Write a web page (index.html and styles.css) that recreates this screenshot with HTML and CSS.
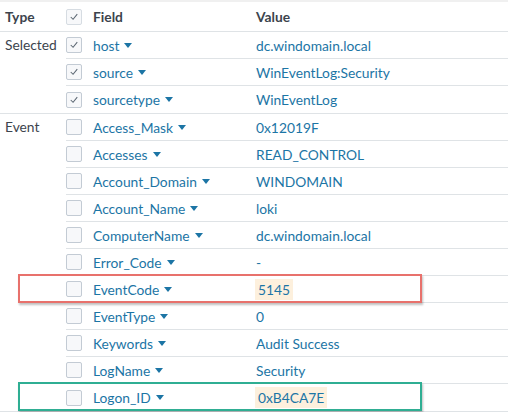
FILE: index.html
```html
<!DOCTYPE html>
<html>
<head>
<meta charset="utf-8">
<link rel="stylesheet" href="styles.css">
</head>
<body>
<div class="table">
  <div class="head">
    <div class="h-type">Type</div>
    <div class="cbcell"><span class="cb cb-head"><svg viewBox="0 0 15 15"><polyline points="4,7.5 6.5,10 11,4.5"/></svg></span></div>
    <div class="h-field">Field</div>
    <div class="h-value">Value</div>
  </div>

  <div class="group">
    <div class="type">Selected</div>
    <div class="rows">
      <div class="row"><div class="cbcell"><span class="cb"><svg viewBox="0 0 15 15"><polyline points="4,7.5 6.5,10 11,4.5"/></svg></span></div><div class="field">host<span class="caret"></span></div><div class="value">dc.windomain.local</div></div>
      <div class="row"><div class="cbcell"><span class="cb"><svg viewBox="0 0 15 15"><polyline points="4,7.5 6.5,10 11,4.5"/></svg></span></div><div class="field">source<span class="caret"></span></div><div class="value">WinEventLog:Security</div></div>
      <div class="row"><div class="cbcell"><span class="cb"><svg viewBox="0 0 15 15"><polyline points="4,7.5 6.5,10 11,4.5"/></svg></span></div><div class="field">sourcetype<span class="caret"></span></div><div class="value">WinEventLog</div></div>
    </div>
  </div>

  <div class="group">
    <div class="type">Event</div>
    <div class="rows">
      <div class="row"><div class="cbcell"><span class="cb"></span></div><div class="field">Access_Mask<span class="caret"></span></div><div class="value">0x12019F</div></div>
      <div class="row"><div class="cbcell"><span class="cb"></span></div><div class="field">Accesses<span class="caret"></span></div><div class="value">READ_CONTROL</div></div>
      <div class="row"><div class="cbcell"><span class="cb"></span></div><div class="field">Account_Domain<span class="caret"></span></div><div class="value">WINDOMAIN</div></div>
      <div class="row"><div class="cbcell"><span class="cb"></span></div><div class="field">Account_Name<span class="caret"></span></div><div class="value">loki</div></div>
      <div class="row"><div class="cbcell"><span class="cb"></span></div><div class="field">ComputerName<span class="caret"></span></div><div class="value">dc.windomain.local</div></div>
      <div class="row"><div class="cbcell"><span class="cb"></span></div><div class="field">Error_Code<span class="caret"></span></div><div class="value">-</div></div>
      <div class="row mark mark-red"><div class="cbcell"><span class="cb"></span></div><div class="field">EventCode<span class="caret"></span></div><div class="value"><span class="hl">5145</span></div></div>
      <div class="row"><div class="cbcell"><span class="cb"></span></div><div class="field">EventType<span class="caret"></span></div><div class="value">0</div></div>
      <div class="row"><div class="cbcell"><span class="cb"></span></div><div class="field">Keywords<span class="caret"></span></div><div class="value">Audit Success</div></div>
      <div class="row"><div class="cbcell"><span class="cb"></span></div><div class="field">LogName<span class="caret"></span></div><div class="value">Security</div></div>
      <div class="row mark mark-green"><div class="cbcell"><span class="cb"></span></div><div class="field">Logon_ID<span class="caret"></span></div><div class="value"><span class="hl">0xB4CA7E</span></div></div>
    </div>
  </div>
</div>
</body>
</html>
```
FILE: styles.css
```css
html, body {
  margin: 0;
  padding: 0;
  background: #ffffff;
}
body {
  font-family: "Lato", "Open Sans", sans-serif;
  font-size: 13.8px;
  color: #3c444d;
  overflow: hidden;
}
.table {
  border-top: 2px solid #f0f0f0;
}
.head {
  display: grid;
  grid-template-columns: 66px 27px 163px 1fr;
  height: 29px;
  align-items: center;
  border-bottom: 1px solid #dfe3e6;
  font-weight: 700;
  color: #3c444d;
}
.h-type {
  padding-left: 5px;
}
.group {
  display: grid;
  grid-template-columns: 66px 1fr;
  border-bottom: 1px solid #dfe3e6;
}
.type {
  padding-left: 5px;
  height: 27px;
  line-height: 26px;
}
.rows {
  display: flex;
  flex-direction: column;
}
.row {
  display: grid;
  grid-template-columns: 27px 163px 1fr;
  height: 26px;
  align-items: center;
  border-bottom: 1px solid #dfe3e6;
  position: relative;
}
.row:last-child {
  border-bottom: none;
  height: 27px;
}
.cbcell {
  display: flex;
  align-items: center;
}
.cb {
  width: 14px;
  height: 14px;
  border: 1px solid #c3cbd4;
  border-radius: 2px;
  background: #f7f8fa;
  display: flex;
  align-items: center;
  justify-content: center;
}
.cb svg {
  width: 14px;
  height: 14px;
  fill: none;
  stroke: #5c6773;
  stroke-width: 1.1;
}
.cb-head {
  border-color: #d6dce2;
}
.field {
  color: #1c75a5;
  display: flex;
  align-items: center;
}
.caret {
  display: inline-block;
  width: 0;
  height: 0;
  margin-left: 5px;
  border-left: 4px solid transparent;
  border-right: 4px solid transparent;
  border-top: 5px solid #1c75a5;
}
.value {
  color: #1c75a5;
}
.hl {
  background: #fdf0dd;
  padding: 2px 3px;
  margin-left: -1px;
}
.mark::after {
  content: "";
  position: absolute;
  left: -48px;
  top: -2px;
  width: 400px;
  height: 25px;
  border: 2px solid;
  box-shadow: 1px 2px 2px rgba(0, 0, 0, 0.25);
  pointer-events: none;
}
.mark-red::after {
  border-color: #e8716c;
}
.mark-green::after {
  border-color: #2fae93;
}
```
